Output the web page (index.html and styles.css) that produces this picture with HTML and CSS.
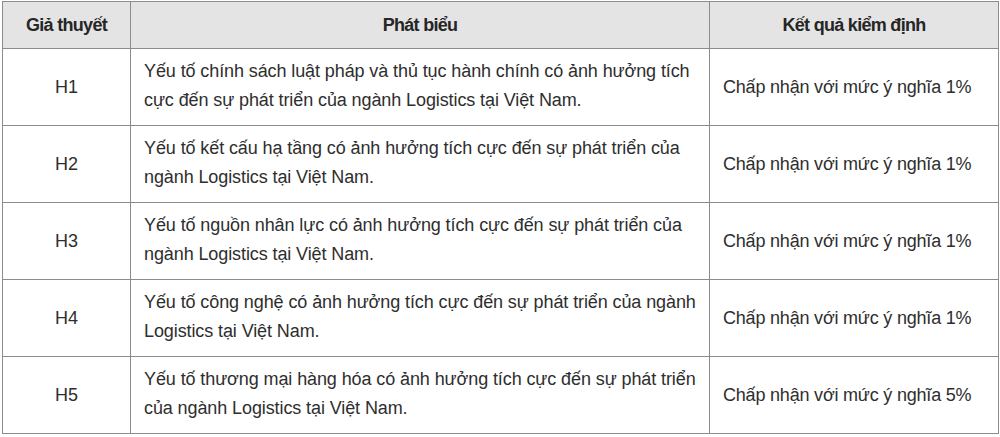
FILE: index.html
```html
<!DOCTYPE html>
<html lang="vi">
<head>
<meta charset="utf-8">
<link rel="stylesheet" href="styles.css">
</head>
<body>
<table class="tbl">
  <colgroup>
    <col class="c1"><col class="c2"><col class="c3">
  </colgroup>
  <thead>
    <tr>
      <th>Giả thuyết</th>
      <th>Phát biểu</th>
      <th>Kết quả kiểm định</th>
    </tr>
  </thead>
  <tbody>
    <tr>
      <td class="id">H1</td>
      <td class="txt">Yếu tố chính sách luật pháp và thủ tục hành chính có ảnh hưởng tích<br>cực đến sự phát triển của ngành Logistics tại Việt Nam.</td>
      <td class="res">Chấp nhận với mức ý nghĩa 1%</td>
    </tr>
    <tr>
      <td class="id">H2</td>
      <td class="txt">Yếu tố kết cấu hạ tầng có ảnh hưởng tích cực đến sự phát triển của<br>ngành Logistics tại Việt Nam.</td>
      <td class="res">Chấp nhận với mức ý nghĩa 1%</td>
    </tr>
    <tr>
      <td class="id">H3</td>
      <td class="txt">Yếu tố nguồn nhân lực có ảnh hưởng tích cực đến sự phát triển của<br>ngành Logistics tại Việt Nam.</td>
      <td class="res">Chấp nhận với mức ý nghĩa 1%</td>
    </tr>
    <tr>
      <td class="id">H4</td>
      <td class="txt">Yếu tố công nghệ có ảnh hưởng tích cực đến sự phát triển của ngành<br>Logistics tại Việt Nam.</td>
      <td class="res">Chấp nhận với mức ý nghĩa 1%</td>
    </tr>
    <tr>
      <td class="id">H5</td>
      <td class="txt">Yếu tố thương mại hàng hóa có ảnh hưởng tích cực đến sự phát triển<br>của ngành Logistics tại Việt Nam.</td>
      <td class="res">Chấp nhận với mức ý nghĩa 5%</td>
    </tr>
  </tbody>
</table>
</body>
</html>
```
FILE: styles.css
```css
html, body {
  margin: 0;
  padding: 0;
  background: #ffffff;
}
body {
  padding: 1px 0 0 2px;
  font-family: "Liberation Sans", Arial, sans-serif;
  color: #2e2e2e;
}
.tbl {
  border-collapse: collapse;
  table-layout: fixed;
  width: 996px;
  font-size: 18px;
}
.c1 { width: 128px; }
.c2 { width: 579px; }
.c3 { width: 289px; }
.tbl th,
.tbl td {
  border: 1px solid #8c8c8c;
  padding: 0;
}
.tbl th {
  height: 46px;
  background: #e4e4e4;
  font-weight: bold;
  letter-spacing: -0.7px;
  color: #262626;
  text-align: center;
}
.tbl td {
  height: 73px;
  line-height: 29px;
}
.tbl .id {
  text-align: center;
}
.tbl .txt {
  padding: 0 0 3px 13px;
  white-space: nowrap;
  letter-spacing: -0.1px;
}
.tbl .res {
  padding: 0 0 0 13px;
  letter-spacing: -0.2px;
  white-space: nowrap;
}
```
